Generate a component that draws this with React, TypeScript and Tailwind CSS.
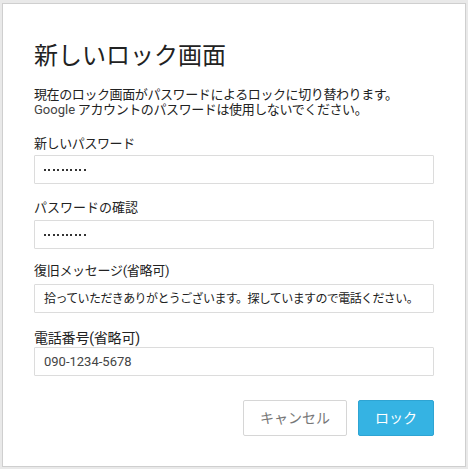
export default function App() {
  const font = { fontFamily: 'Roboto, "Noto Sans CJK JP", sans-serif' };
  return (
    <div className="w-[468px] h-[469px] bg-[#e9e9e9] pt-[3px] pl-[2px]" style={font}>
      <div className="w-[464px] h-[464px] bg-white border border-[#cfcfcf] px-[31px] pt-[36px] text-[#222]">
        <h1 className="text-[24px] leading-[32px] font-normal text-[#222]">新しいロック画面</h1>
        <p className="mt-[15px] text-[13px] leading-[15px] tracking-[-0.4px] text-[#222]">
          現在のロック画面がパスワードによるロックに切り替わります。
          <br />
          <span className="tracking-normal text-[#444]">Google</span> アカウントのパスワードは使用しないでください。
        </p>

        <div className="mt-[19px] text-[13px] leading-[16px] tracking-[-0.4px]">新しいパスワード</div>
        <div className="mt-[3px]">
          <Box>
            <Dots />
          </Box>
        </div>

        <div className="mt-[16px] text-[13px] leading-[16px]">パスワードの確認</div>
        <div className="mt-[4px]">
          <Box>
            <Dots />
          </Box>
        </div>

        <div className="mt-[14px] text-[13px] leading-[16px] tracking-[-0.3px]">復旧メッセージ(省略可)</div>
        <div className="mt-[5px]">
          <Box>
            <span className="text-[12px] tracking-[-0.6px] whitespace-nowrap text-[#222]">
              拾っていただきありがとうございます。探していますので電話ください。
            </span>
          </Box>
        </div>

        <div className="mt-[17px] text-[14px] leading-[16px] tracking-[-0.2px]">電話番号(省略可)</div>
        <div className="mt-[1px]">
          <Box>
            <span className="text-[13px] text-[#444]">090-1234-5678</span>
          </Box>
        </div>

        <div className="mt-[24px] flex justify-end gap-[11px]">
          <button className="w-[104px] h-[36px] bg-white border border-[#d6d6d6] rounded-[2px] text-[14px] text-[#777]">
            キャンセル
          </button>
          <button className="w-[76px] h-[36px] bg-[#35b3e3] border border-[#2ea4d3] rounded-[2px] text-[14px] text-white">
            ロック
          </button>
        </div>
      </div>
    </div>
  );
}

function Box({ children }: { children: React.ReactNode }) {
  return (
    <div className="h-[29px] border border-[#dcdcdc] rounded-[1px] pl-[9px] pr-[4px] flex items-center overflow-hidden">
      {children}
    </div>
  );
}

function Dots() {
  return (
    <div className="flex gap-[2.4px]">
      {Array.from({ length: 10 }).map((_, i) => (
        <span key={i} className="w-[2px] h-[2px] bg-[#333]" />
      ))}
    </div>
  );
}
